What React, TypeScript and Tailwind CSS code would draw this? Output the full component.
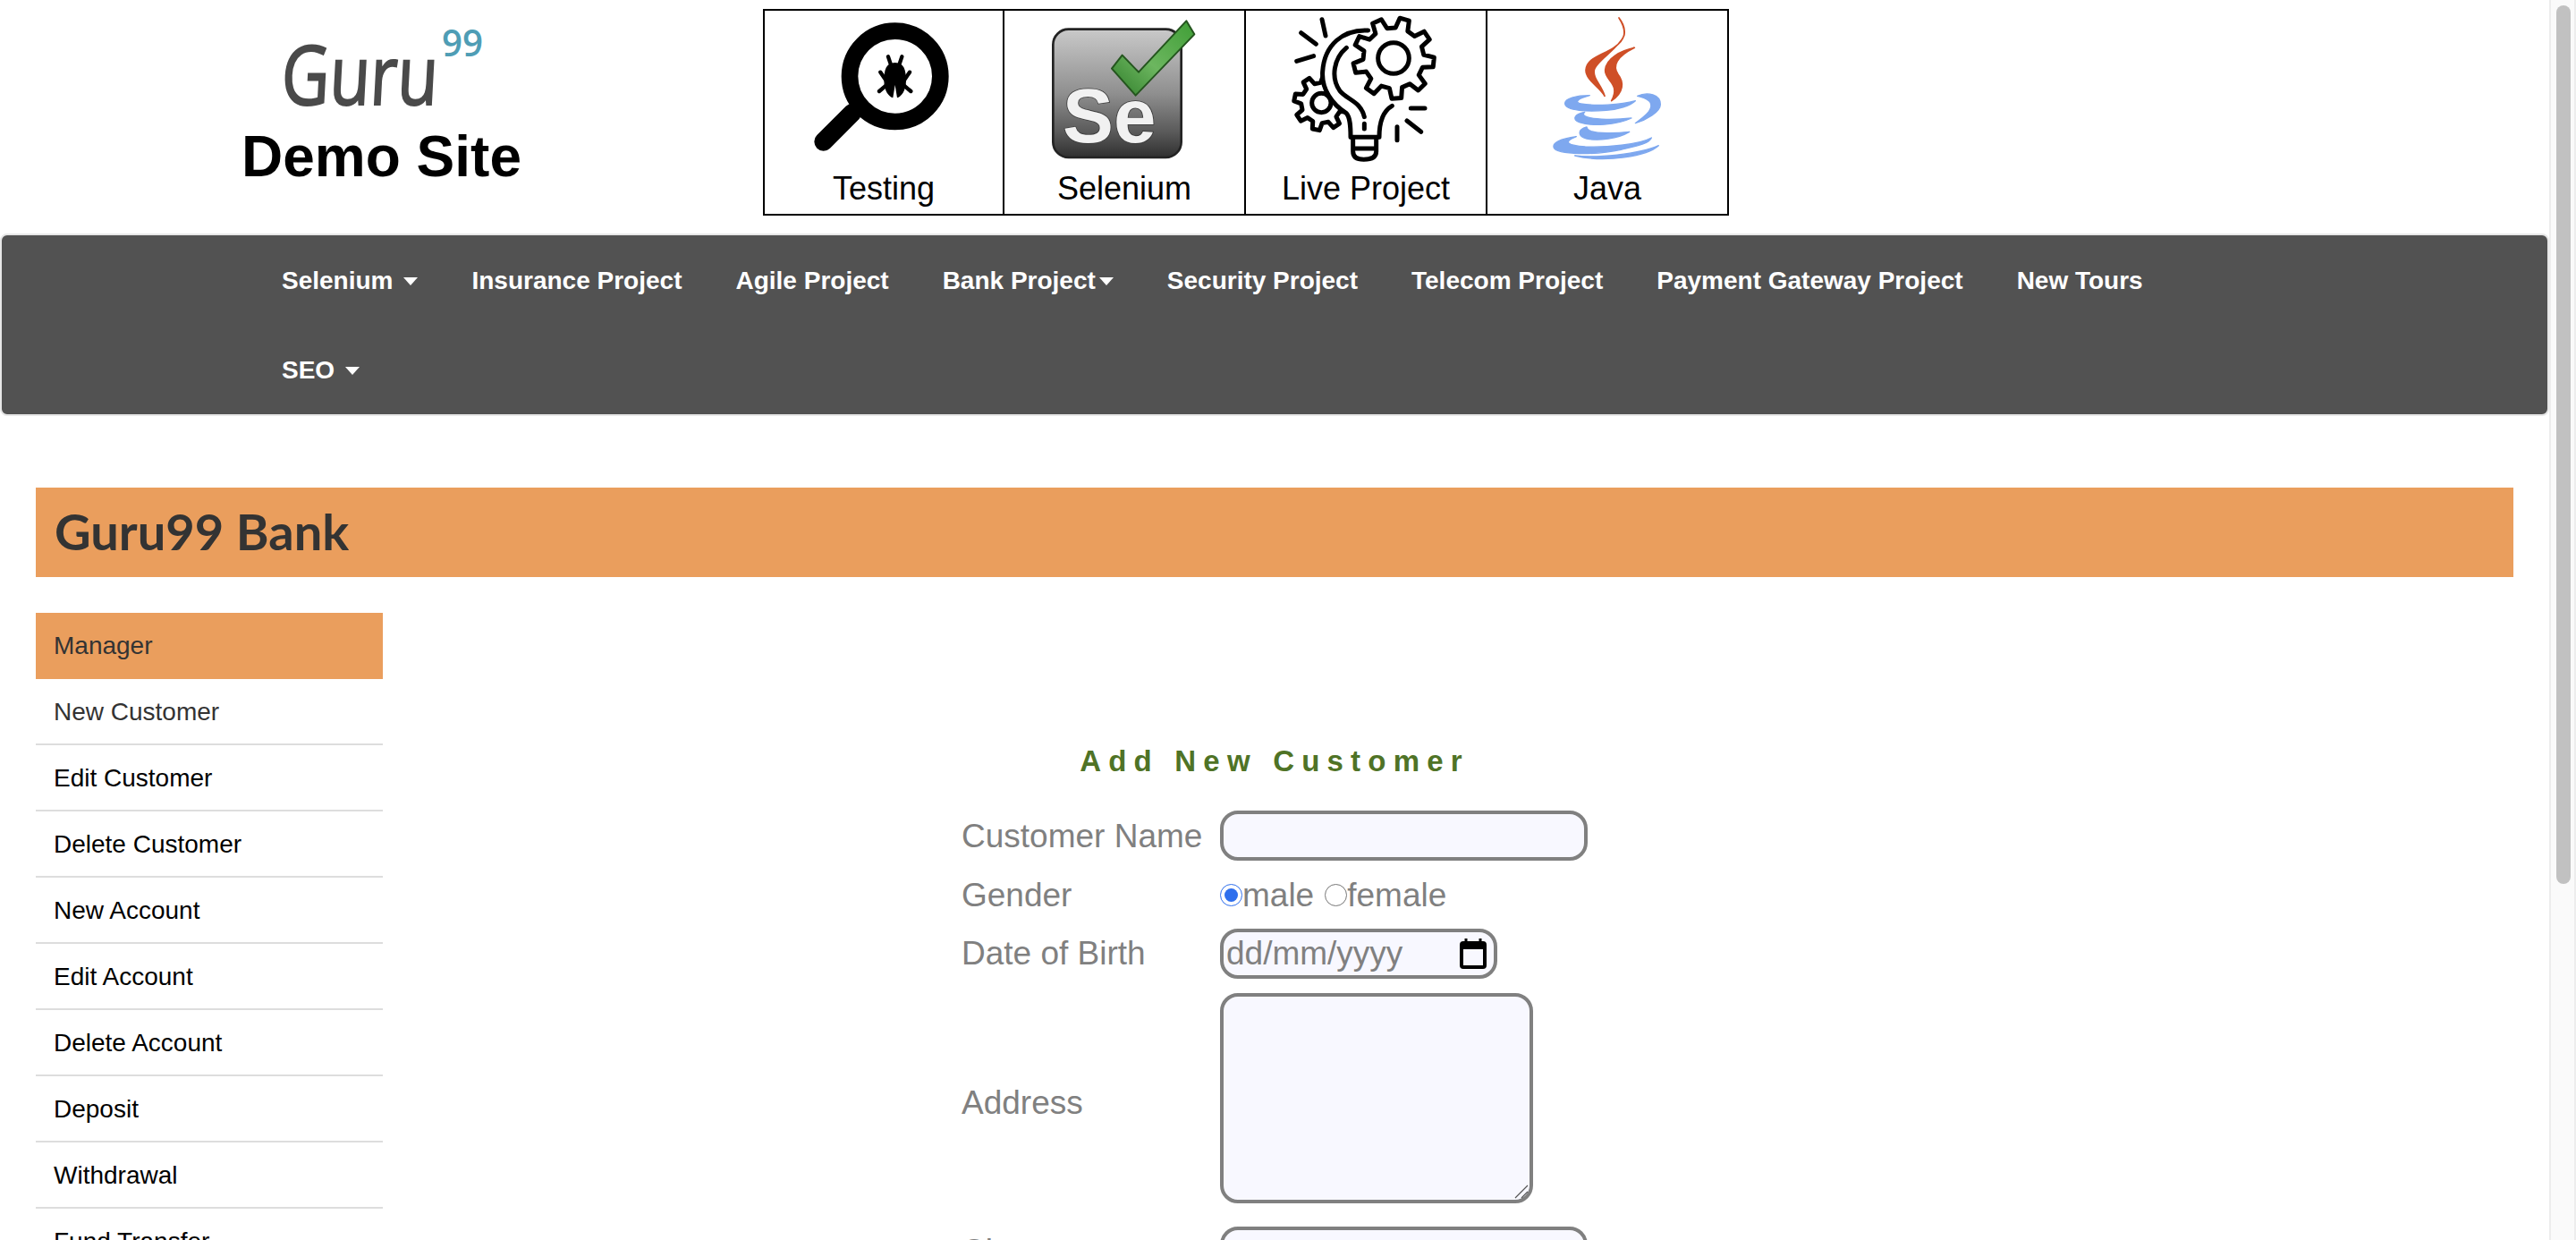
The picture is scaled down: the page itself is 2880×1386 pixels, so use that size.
const sideLinks = [
  'New Customer',
  'Edit Customer',
  'Delete Customer',
  'New Account',
  'Edit Account',
  'Delete Account',
  'Deposit',
  'Withdrawal',
  'Fund Transfer',
]

const navItems = [
  { label: 'Selenium', caret: 'wide' },
  { label: 'Insurance Project' },
  { label: 'Agile Project' },
  { label: 'Bank Project', caret: 'tight' },
  { label: 'Security Project' },
  { label: 'Telecom Project' },
  { label: 'Payment Gateway Project' },
  { label: 'New Tours' },
  { label: 'SEO', caret: 'wide' },
]

const gearPath = (cx: number, cy: number, outer: number, inner: number, teeth: number, start = 0) => {
  const pts: string[] = []
  const step = (Math.PI * 2) / teeth
  for (let i = 0; i < teeth; i++) {
    const a = start + i * step
    const corners: [number, number][] = [
      [a - step * 0.3, inner],
      [a - step * 0.17, outer],
      [a + step * 0.17, outer],
      [a + step * 0.3, inner],
    ]
    corners.forEach(([t, r]) => {
      pts.push(`${(cx + Math.cos(t) * r).toFixed(1)},${(cy + Math.sin(t) * r).toFixed(1)}`)
    })
  }
  return `M${pts.join(' L')} Z`
}

const TestingIcon = () => (
  <svg viewBox="-75 6 804 510" className="w-[268px] h-[170px] shrink-0">
    <circle cx="365" cy="226" r="152" fill="none" stroke="#000" strokeWidth="56" />
    <path d="M222 348 L125 445" stroke="#000" strokeWidth="62" strokeLinecap="round" />
    <path d="M365 180 C395 180 402 205 402 240 C402 275 385 295 372 298 L365 255 L358 298 C345 295 328 275 328 240 C328 205 335 180 365 180 Z" fill="#000" />
    <path
      d="M342 160 L352 190 M388 160 L378 190 M316 212 L335 240 M414 212 L395 240 M312 276 L338 254 M418 276 L392 254"
      stroke="#000"
      strokeWidth="13"
      strokeLinecap="round"
      fill="none"
    />
  </svg>
)

const SeleniumIcon = () => (
  <svg viewBox="-45 6 804 510" className="w-[268px] h-[170px] shrink-0">
    <defs>
      <linearGradient id="se-box" x1="0" y1="0" x2="0" y2="1">
        <stop offset="0" stopColor="#c9c9c9" />
        <stop offset="0.5" stopColor="#8f8f8f" />
        <stop offset="0.8" stopColor="#5a5a5a" />
        <stop offset="1" stopColor="#2f2f2f" />
      </linearGradient>
      <linearGradient id="se-check" x1="0" y1="1" x2="1" y2="0">
        <stop offset="0" stopColor="#2f7d2a" />
        <stop offset="0.45" stopColor="#6cb65f" />
        <stop offset="1" stopColor="#3f9e36" />
      </linearGradient>
    </defs>
    <rect x="118" y="68" width="430" height="430" rx="52" fill="url(#se-box)" stroke="#232323" strokeWidth="8" />
    <text
      x="150"
      y="448"
      fontFamily="'Liberation Sans', sans-serif"
      fontWeight="700"
      fontSize="256"
      fill="#f1f1f1"
      stroke="#3a3a3a"
      strokeWidth="5"
      paintOrder="stroke"
    >
      Se
    </text>
    <path d="M315 200 L350 155 L405 212 L565 40 L592 85 L395 290 Z" fill="url(#se-check)" stroke="#24551e" strokeWidth="6" strokeLinejoin="round" />
  </svg>
)

const LiveProjectIcon = () => (
  <svg viewBox="-75 6 804 510" className="w-[268px] h-[170px] shrink-0">
    <g stroke="#000" strokeWidth="15" strokeLinecap="round" strokeLinejoin="round" fill="none">
      <path d="M180 35 L192 90 M110 80 L160 118 M95 175 L152 158 M478 333 L525 333 M465 375 L512 412 M432 395 L432 440" />
      <path d={gearPath(178, 315, 92, 68, 8, 0.2)} fill="#fff" />
      <circle cx="178" cy="315" r="32" />
      <path
        d="M335 72 C250 68 188 120 182 210 C178 270 215 320 262 350 C275 365 276 395 276 430 L372 430 C372 385 380 345 415 325 L420 200 L335 72 Z"
        fill="#fff"
        stroke="none"
      />
      <path d="M335 72 C250 68 188 120 182 210 C178 270 215 320 262 350 C275 365 276 395 276 430 M415 325 C380 345 372 385 372 430" />
      <path d="M262 130 C220 165 208 230 240 275 C265 305 310 310 322 362 M322 385 L322 402" />
      <path d="M278 430 L368 430 M284 468 L362 468 M284 430 L284 478 C284 498 300 505 320 505 C345 505 362 498 362 478 L362 430" />
      <path d={gearPath(420, 165, 136, 102, 9, 0.1)} fill="#fff" />
      <circle cx="420" cy="165" r="52" />
    </g>
  </svg>
)

const JavaIcon = () => (
  <svg viewBox="-108 6 804 510" className="w-[268px] h-[170px] shrink-0">
    <g fill="#cf4f27" stroke="#cf4f27" strokeWidth="5" strokeLinejoin="round">
      <path d="M333 30 C362 75 355 105 315 130 C270 158 225 165 222 205 C222 240 270 262 285 292 C275 255 245 235 250 205 C255 175 330 135 350 90 C356 65 345 45 333 30 Z" />
      <path d="M385 130 C340 140 290 165 287 205 C285 240 340 250 308 308 C350 280 350 245 330 220 C310 190 325 160 385 130 Z" />
    </g>
    <g fill="#7ea8ef" stroke="#7ea8ef" strokeWidth="4" strokeLinejoin="round">
      <path d="M235 290 C190 290 150 300 152 318 C155 342 230 345 290 340 C330 337 370 325 388 308 C340 322 250 326 205 318 C185 314 190 302 235 290 Z" />
      <path d="M395 292 C430 276 472 288 472 320 C472 345 425 372 388 383 C420 360 445 340 440 318 C435 302 415 298 395 292 Z" />
      <path d="M218 346 C182 352 176 372 200 380 C240 394 325 390 375 366 C320 372 255 372 225 362 C212 358 212 352 218 346 Z" />
      <path d="M225 396 C192 405 195 428 225 435 C265 444 330 435 368 412 C320 418 262 418 240 410 C230 406 226 402 225 396 Z" />
      <path d="M190 428 C135 435 108 450 115 466 C125 490 260 490 340 472 C390 460 435 452 442 432 C400 455 290 465 220 462 C165 458 140 448 190 428 Z" />
      <path d="M466 458 C430 492 290 518 185 492 C255 500 400 488 466 458 Z" />
    </g>
  </svg>
)

const tiles = [
  { label: 'Testing', icon: <TestingIcon /> },
  { label: 'Selenium', icon: <SeleniumIcon /> },
  { label: 'Live Project', icon: <LiveProjectIcon /> },
  { label: 'Java', icon: <JavaIcon /> },
]

const Logo = () => (
  <svg viewBox="0 -20 240 140" className="w-[240px] h-[140px]">
    <text
      x="7"
      y="89"
      textLength="175"
      lengthAdjust="spacingAndGlyphs"
      fontFamily="'Open Sans', sans-serif"
      fontSize="92"
      fill="#4a4a4a"
      stroke="#4a4a4a"
      strokeWidth="2"
      transform="skewX(-3) translate(4 0)"
    >
      Guru
    </text>
    <text x="187" y="35" textLength="46" lengthAdjust="spacingAndGlyphs" fontFamily="'Open Sans', sans-serif" fontWeight="600" fontSize="42" fill="#4f9db5">
      99
    </text>
  </svg>
)

const Caret = () => <span className="inline-block w-0 h-0 border-x-8 border-x-transparent border-t-[9px] border-t-white" />

const CalendarIcon = () => (
  <svg viewBox="0 0 30 34" className="w-[30px] h-[34px]">
    <path d="M7 0 L7 5 M23 0 L23 5" stroke="#000" strokeWidth="3" />
    <rect x="2" y="5" width="26" height="27" rx="2" fill="none" stroke="#000" strokeWidth="4" />
    <rect x="2" y="5" width="26" height="7" fill="#000" />
  </svg>
)

const App = () => {
  return (
    <div className="flex h-[1386px] overflow-hidden bg-white font-['Liberation_Sans',Arial,sans-serif] text-black">
      <div className="w-[2850px] shrink-0">
        <header className="flex h-[261px]">
          <div className="w-[853px] flex flex-col items-center pt-[8px]">
            <Logo />
            <h1 className="-mt-[5px] text-[64px] leading-[64px] font-bold">Demo Site</h1>
          </div>
          <div className="mt-[10px] w-[1080px] h-[231px] grid grid-cols-[268px_270px_270px_1fr] border-2 border-black">
            {tiles.map((tile, i) => (
              <div key={tile.label} className={i < 3 ? 'flex flex-col items-center border-r-2 border-black' : 'flex flex-col items-center'}>
                {tile.icon}
                <span className="mt-[8px] text-[36px] leading-[41px]">{tile.label}</span>
              </div>
            ))}
          </div>
        </header>

        <nav className="h-[204px] bg-[#525252] border-2 border-[#e7e7e7] rounded-lg pl-[283px] pt-[1px]">
          <ul className="flex flex-wrap w-[2280px]">
            {navItems.map((item) => (
              <li key={item.label} className="h-[100px] px-[30px] flex items-center text-[28px] font-bold text-white">
                {item.label}
                {item.caret === 'wide' && (
                  <span className="ml-[12px] flex">
                    <Caret />
                  </span>
                )}
                {item.caret === 'tight' && (
                  <span className="ml-[4px] flex">
                    <Caret />
                  </span>
                )}
              </li>
            ))}
          </ul>
        </nav>

        <div className="mx-10 mt-[80px] h-[100px] bg-[#ea9e5d] px-[21px] pb-[2px] flex items-center">
          <h2 className="font-['Lato',sans-serif] font-bold text-[56px] text-[#333]">Guru99 Bank</h2>
        </div>

        <div className="flex mx-10 mt-10">
          <ul className="w-[388px] shrink-0 text-[28px]">
            <li className="h-[74px] px-[20px] flex items-center bg-[#ea9e5d] text-[#333]">Manager</li>
            {sideLinks.map((link, i) => (
              <li key={link} className={i === 0 ? 'h-[74px] px-[20px] pt-[2px] flex items-center border-b-2 border-[#ddd] text-[#333]' : 'h-[74px] px-[20px] pt-[2px] flex items-center border-b-2 border-[#ddd]'}>
                {link}
              </li>
            ))}
          </ul>

          <form className="ml-[647px] w-[700px] text-[37px] leading-[44px] text-[#808080]">
            <h3 className="mt-[148px] text-center text-[33px] leading-[36px] font-bold tracking-[8.2px] text-[#4f7326]">Add New Customer</h3>
            <div className="mt-[37px] grid grid-cols-[289px_1fr] items-center">
              <label className="pt-[1px]">Customer Name</label>
              <input className="w-[411px] h-[56px] bg-[#f8f8ff] border-4 border-[#808080] rounded-[20px] outline-none" />

              <label className="mt-[16px] pt-[1px]">Gender</label>
              <div className="mt-[16px] flex items-center h-[44px]">
                <input type="radio" name="gender" defaultChecked className="m-0 w-[25px] h-[25px] accent-[#2f6fed]" />
                <span>male</span>
                <input type="radio" name="gender" className="m-0 ml-[12px] w-[25px] h-[25px]" />
                <span>female</span>
              </div>

              <label className="mt-[15px]">Date of Birth</label>
              <div className="mt-[15px] w-[310px] h-[56px] pl-[3px] pr-[8px] flex items-center justify-between bg-[#f8f8ff] border-4 border-[#808080] rounded-[20px]">
                <span>dd/mm/yyyy</span>
                <CalendarIcon />
              </div>

              <label className="mt-[16px] pt-[10px]">Address</label>
              <div className="relative mt-[16px] w-[350px] h-[235px]">
                <textarea className="block w-full h-full resize-none bg-[#f8f8ff] border-4 border-[#808080] rounded-[20px] outline-none" />
                <svg viewBox="0 0 16 16" className="absolute right-[5px] bottom-[5px] w-[16px] h-[16px]">
                  <path d="M1 15 L15 1 M8 15 L15 8" stroke="#555" strokeWidth="1.2" fill="none" />
                </svg>
              </div>

              <label className="mt-[26px]">City</label>
              <input className="mt-[26px] w-[411px] h-[56px] bg-[#f8f8ff] border-4 border-[#808080] rounded-[20px] outline-none" />
            </div>
          </form>
        </div>
      </div>

      <aside className="w-[30px] shrink-0 bg-[#fafafa] border-l-2 border-r-2 border-[#ededed] pt-[6px] pl-[6px]">
        <div className="w-[16px] h-[982px] rounded-full bg-[#c1c1c1]" />
      </aside>
    </div>
  )
}

export default App
